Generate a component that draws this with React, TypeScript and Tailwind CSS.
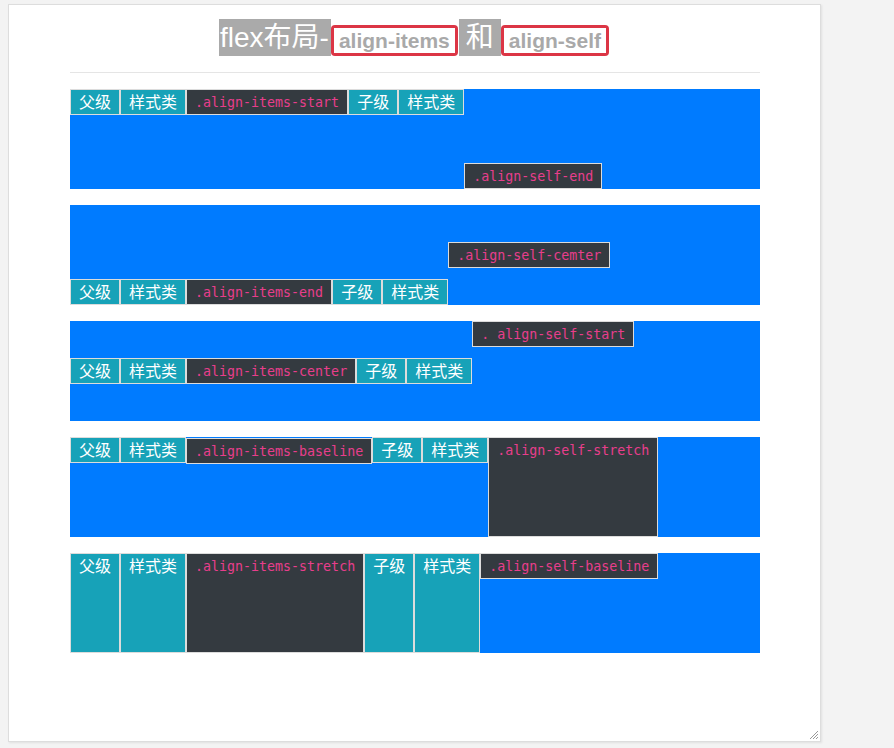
import React from 'react';

const CN = { fontFamily: '"Liberation Sans", "Noto Sans CJK SC", sans-serif' };

const Tag: React.FC<{ children: React.ReactNode; self?: string }> = ({ children, self = '' }) => (
    <div
        className={`bg-[#17a2b8] text-white border border-[#dcdcdc] px-2 pt-[2px] text-base leading-[22px] ${self}`}
        style={CN}
    >
        {children}
    </div>
);

const Code: React.FC<{ children: React.ReactNode; self?: string }> = ({ children, self = '' }) => (
    <div
        className={`bg-[#343a40] text-[#e83e8c] border border-[#dcdcdc] px-2 pt-[2px] text-[13.3px] leading-[22px] whitespace-pre ${self}`}
        style={{ fontFamily: '"DejaVu Sans Mono", monospace' }}
    >
        {children}
    </div>
);

const Badge: React.FC<{ children: React.ReactNode }> = ({ children }) => (
    <span className="inline-block bg-[#dc3545] rounded-[4px] p-[3px] h-[31px]">
        <span className="block bg-white h-[25px] px-[5px] text-[21px] leading-[25px] font-bold text-[#a9a9a9]">
            {children}
        </span>
    </span>
);

export default function App() {
    return (
        <div className="min-h-screen bg-[#f3f3f3] pt-[4px] pl-[8px]">
            <div className="relative w-[813px] h-[738px] bg-white border border-[#dddddd] shadow-[1px_1px_2px_rgba(0,0,0,0.08)]">
                <div className="ml-[61px] w-[690px]">
                    {/* title */}
                    <div className="flex items-end justify-center mt-[14px] pr-[2px]" style={CN}>
                        <span className="inline-block bg-[#aaaaaa] text-white text-[28px] leading-[37px] h-[37px] pl-px pr-[2px]">flex布局-</span>
                        <Badge>align-items</Badge>
                        <span className="inline-block bg-[#aaaaaa] text-white text-[28px] leading-[37px] h-[37px] px-[7px] ml-px">和</span>
                        <Badge>align-self</Badge>
                    </div>
                    <div className="mt-[16px] border-t border-[#e5e5e5]" />

                    <div className="mt-[16px] flex flex-col gap-4">
                        <div className="flex items-start h-[100px] bg-[#007bff]">
                            <Tag>父级</Tag>
                            <Tag>样式类</Tag>
                            <Code>.align-items-start</Code>
                            <Tag>子级</Tag>
                            <Tag>样式类</Tag>
                            <Code self="self-end">.align-self-end</Code>
                        </div>

                        <div className="flex items-end h-[100px] bg-[#007bff]">
                            <Tag>父级</Tag>
                            <Tag>样式类</Tag>
                            <Code>.align-items-end</Code>
                            <Tag>子级</Tag>
                            <Tag>样式类</Tag>
                            <Code self="self-center">.align-self-cemter</Code>
                        </div>

                        <div className="flex items-center h-[100px] bg-[#007bff]">
                            <Tag>父级</Tag>
                            <Tag>样式类</Tag>
                            <Code>.align-items-center</Code>
                            <Tag>子级</Tag>
                            <Tag>样式类</Tag>
                            <Code self="self-start">. align-self-start</Code>
                        </div>

                        <div className="flex items-baseline h-[100px] bg-[#007bff]">
                            <Tag>父级</Tag>
                            <Tag>样式类</Tag>
                            <Code>.align-items-baseline</Code>
                            <Tag>子级</Tag>
                            <Tag>样式类</Tag>
                            <Code self="self-stretch">.align-self-stretch</Code>
                        </div>

                        <div className="flex items-stretch h-[100px] bg-[#007bff]">
                            <Tag>父级</Tag>
                            <Tag>样式类</Tag>
                            <Code>.align-items-stretch</Code>
                            <Tag>子级</Tag>
                            <Tag>样式类</Tag>
                            <Code self="self-baseline">.align-self-baseline</Code>
                        </div>
                    </div>
                </div>

                {/* resize grip */}
                <svg className="absolute right-[1px] bottom-[1px]" width="11" height="11" viewBox="0 0 11 11">
                    <path d="M10 2 L2 10 M10 5 L5 10 M10 8 L8 10" stroke="#9a9a9a" strokeWidth="1" />
                </svg>
            </div>
        </div>
    );
}
